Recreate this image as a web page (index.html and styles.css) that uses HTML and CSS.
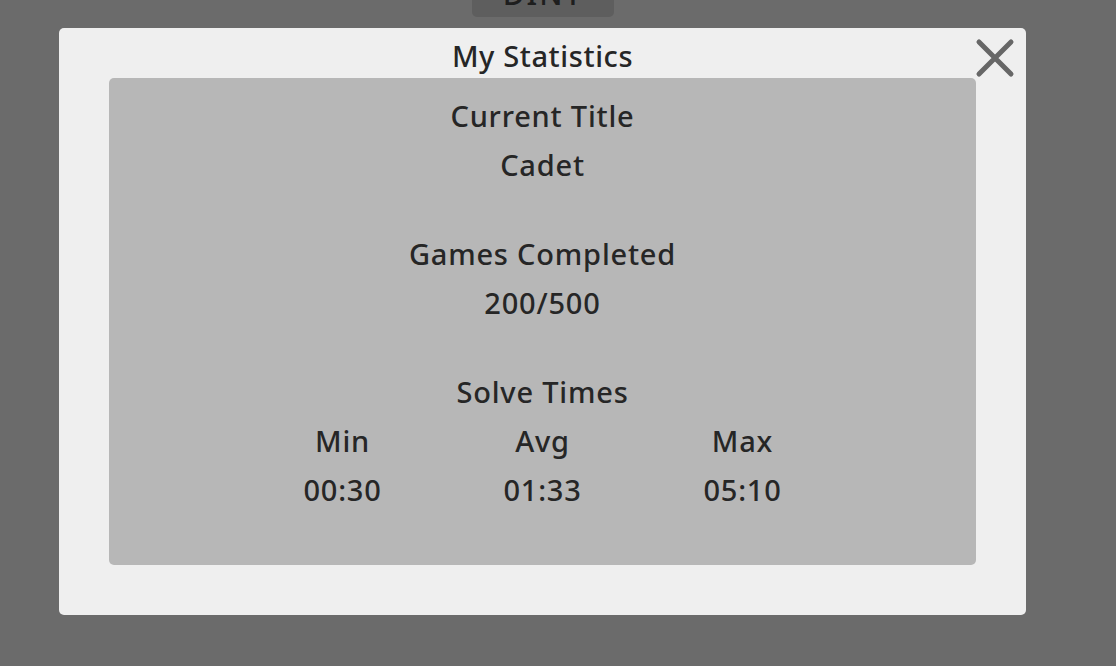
FILE: index.html
```html
<!DOCTYPE html>
<html>
<head>
<meta charset="utf-8">
<link rel="stylesheet" href="styles.css">
</head>
<body>
<div class="page">
  <div class="topbar"><div class="hintbtn">DINT</div></div>
</div>
<div class="overlay">
  <div class="modal">
    <div class="modal-head">
      <h1 class="modal-title">My Statistics</h1>
      <button class="close" aria-label="Close">
        <svg width="40" height="40" viewBox="0 0 40 40"><path d="M4 4 L36 36 M36 4 L4 36" stroke="#676767" stroke-width="5" stroke-linecap="round"/></svg>
      </button>
    </div>
    <div class="panel">
      <div class="line">Current Title</div>
      <div class="line">Cadet</div>
      <div class="spacer"></div>
      <div class="line">Games Completed</div>
      <div class="line">200/500</div>
      <div class="spacer"></div>
      <div class="line">Solve Times</div>
      <div class="times">
        <div class="col"><div class="line">Min</div><div class="line">00:30</div></div>
        <div class="col"><div class="line">Avg</div><div class="line">01:33</div></div>
        <div class="col"><div class="line">Max</div><div class="line">05:10</div></div>
      </div>
    </div>
  </div>
</div>
</body>
</html>
```
FILE: styles.css
```css
html, body {
  margin: 0;
  padding: 0;
  width: 1116px;
  height: 666px;
  overflow: hidden;
  background: #6b6b6b;
  font-family: "Noto Sans", "Lato", sans-serif;
  color: #262626;
}
.page {
  width: 1116px;
  height: 666px;
}
.topbar {
  display: flex;
  justify-content: center;
  padding-right: 30px;
}
.hintbtn {
  width: 142px;
  height: 50px;
  margin-top: -33px;
  background: #5e5e5e;
  border-radius: 0 0 5px 5px;
  text-align: center;
  font-size: 30px;
  font-weight: 500;
  line-height: 30px;
  padding-top: 12px;
  box-sizing: border-box;
  color: #1e1e1e;
  letter-spacing: 2px;
}
.overlay {
  position: absolute;
  left: 59px;
  top: 28px;
}
.modal {
  width: 967px;
  height: 587px;
  background: #efefef;
  border-radius: 5px;
  box-sizing: border-box;
  padding: 0 50px 50px;
  display: flex;
  flex-direction: column;
}
.modal-head {
  height: 50px;
  display: flex;
  align-items: center;
  justify-content: center;
  position: relative;
}
.modal-title {
  margin: 0;
  font-size: 29px;
  font-weight: 500;
  letter-spacing: 0.6px;
  line-height: 50px;
  padding-top: 5px;
  color: #262626;
}
.close {
  position: absolute;
  right: -39px;
  top: 10px;
  width: 40px;
  height: 40px;
  padding: 0;
  border: 0;
  background: none;
}
.close svg { display: block; }
.panel {
  flex: 1;
  background: #b7b7b7;
  border-radius: 5px;
  padding-top: 13px;
  display: flex;
  flex-direction: column;
  align-items: center;
}
.line {
  font-size: 29px;
  font-weight: 500;
  letter-spacing: 0.8px;
  line-height: 49px;
  height: 49px;
  text-align: center;
  white-space: nowrap;
}
.spacer { height: 40px; }
.times {
  display: flex;
  justify-content: center;
}
.col {
  width: 200px;
  display: flex;
  flex-direction: column;
  align-items: center;
}
```
